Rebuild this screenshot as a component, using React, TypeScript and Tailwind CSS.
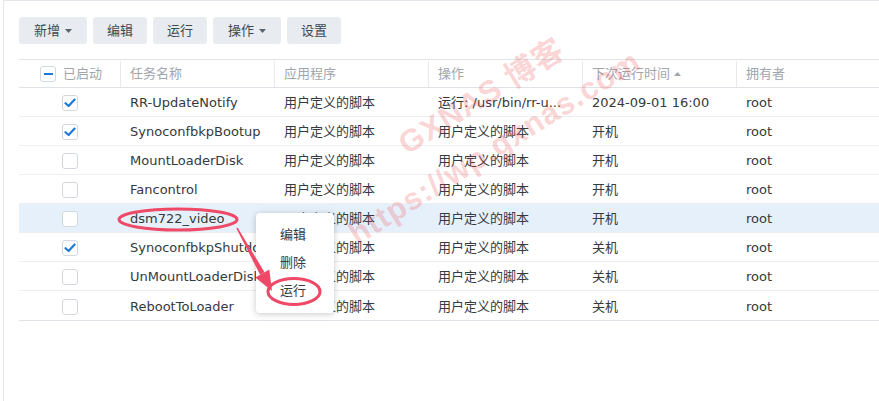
const rows = [
  { on: true, name: "RR-UpdateNotify", app: "用户定义的脚本", op: "运行: /usr/bin/rr-u...", next: "2024-09-01 16:00" },
  { on: true, name: "SynoconfbkpBootup", app: "用户定义的脚本", op: "用户定义的脚本", next: "开机" },
  { on: false, name: "MountLoaderDisk", app: "用户定义的脚本", op: "用户定义的脚本", next: "开机" },
  { on: false, name: "Fancontrol", app: "用户定义的脚本", op: "用户定义的脚本", next: "开机" },
  { on: false, name: "dsm722_video", app: "用户定义的脚本", op: "用户定义的脚本", next: "开机", selected: true },
  { on: true, name: "SynoconfbkpShutdown", app: "用户定义的脚本", op: "用户定义的脚本", next: "关机" },
  { on: false, name: "UnMountLoaderDisk", app: "用户定义的脚本", op: "用户定义的脚本", next: "关机" },
  { on: false, name: "RebootToLoader", app: "用户定义的脚本", op: "用户定义的脚本", next: "关机" },
];

const Caret = () => (
  <svg width="7" height="4" viewBox="0 0 7 4" className="ml-[5px]">
    <path d="M0 0h7L3.5 4z" fill="#5a646e" />
  </svg>
);

const Checkbox = ({ checked }: { checked?: boolean }) => (
  <div className="flex h-4 w-4 items-center justify-center rounded-[3px] border border-[#d3d8de] bg-white">
    {checked && (
      <svg width="12" height="10" viewBox="0 0 12 10">
        <path d="M1.5 5.2 4.6 8 10.6 1.6" fill="none" stroke="#1d7ad8" strokeWidth="2.2" strokeLinecap="round" strokeLinejoin="round" />
      </svg>
    )}
  </div>
);

const ToolButton = ({ label, caret }: { label: string; caret?: boolean }) => (
  <button
    className={
      "flex h-[27px] items-center justify-center rounded-[3px] bg-[#e8ecf0] text-[13px] text-[#3f4852] " +
      (caret ? "w-[68px]" : "w-[54px]")
    }
  >
    {label}
    {caret && <Caret />}
  </button>
);

const cols = "grid grid-cols-[102px_154px_154px_154px_154px_1fr]";

export default function App() {
  return (
    <div className="relative h-[401px] w-[879px] overflow-hidden bg-white font-['DejaVu_Sans','Noto_Sans_CJK_SC',sans-serif]">
      <div className="ml-[3px] h-full border-l border-t border-[#e3e6ea] pl-[15px] pt-4">
        <div className="flex gap-[6px]">
          <ToolButton label="新增" caret />
          <ToolButton label="编辑" />
          <ToolButton label="运行" />
          <ToolButton label="操作" caret />
          <ToolButton label="设置" />
        </div>

        <div className="mt-[15px] border-b border-[#dfe3e8]">
          <div className={cols + " h-[29px] border-y border-[#dfe3e8] pt-[1px] text-[13px] text-[#9fa6ad]"}>
            <div className="flex items-center gap-[7px] border-r border-[#e6e9ed] pl-[21px]">
              <div className="flex h-4 w-4 items-center justify-center rounded-[3px] border border-[#d3d8de] bg-white">
                <div className="h-[2px] w-[9px] bg-[#1d7ad8]" />
              </div>
              已启动
            </div>
            <div className="flex items-center border-r border-[#e6e9ed] pl-[9px]">任务名称</div>
            <div className="flex items-center border-r border-[#e6e9ed] pl-[9px]">应用程序</div>
            <div className="flex items-center border-r border-[#e6e9ed] pl-[9px]">操作</div>
            <div className="flex items-center border-r border-[#e6e9ed] pl-[9px]">
              下次运行时间
              <svg width="7" height="4" viewBox="0 0 7 4" className="ml-[4px]">
                <path d="M0 4h7L3.5 0z" fill="#9fa6ad" />
              </svg>
            </div>
            <div className="flex items-center pl-[9px]">拥有者</div>
          </div>

          {rows.map((r, i) => (
            <div
              key={r.name}
              className={
                cols +
                " h-[29px] pt-[2px] text-[13px] text-[#343a40] " +
                (i < rows.length - 1 ? "border-b border-[#eceef1] " : "") +
                (r.selected ? "bg-[#e6f0fb]" : "")
              }
            >
              <div className="flex items-center justify-center">
                <Checkbox checked={r.on} />
              </div>
              <div className="flex items-center overflow-hidden whitespace-nowrap pl-[9px]">{r.name}</div>
              <div className="flex items-center whitespace-nowrap pl-[9px]">{r.app}</div>
              <div className="flex items-center whitespace-nowrap pl-[9px]">{r.op}</div>
              <div className="flex items-center whitespace-nowrap pl-[9px]">{r.next}</div>
              <div className="flex items-center pl-[9px]">root</div>
            </div>
          ))}
        </div>
      </div>

      {/* context menu */}
      <div className="absolute left-[256px] top-[213px] z-10 flex h-[100px] w-[78px] flex-col justify-center gap-[8px] rounded-[4px] bg-white pl-[24px] text-[13px] text-[#343a40] shadow-[0_1px_6px_rgba(0,0,0,0.22)] font-['DejaVu_Sans','Noto_Sans_CJK_SC',sans-serif]">
        <div className="leading-[20px]">编辑</div>
        <div className="leading-[20px]">删除</div>
        <div className="leading-[20px]">运行</div>
      </div>

      {/* watermark */}
      <div className="pointer-events-none absolute left-[482px] top-[97px] z-20 -translate-x-1/2 -translate-y-1/2 -rotate-[32deg] whitespace-nowrap text-[31px] font-bold tracking-[1px] text-[rgba(238,70,70,0.24)] font-['Liberation_Sans','Noto_Sans_CJK_SC',sans-serif]">
        GXNAS 博客
      </div>
      <div className="pointer-events-none absolute left-[495px] top-[148px] z-20 -translate-x-1/2 -translate-y-1/2 -rotate-[32deg] whitespace-nowrap text-[31px] font-bold tracking-[1px] text-[rgba(238,70,70,0.24)] font-['Liberation_Sans',sans-serif]">
        https://wp.gxnas.com
      </div>

      {/* annotations */}
      <svg className="pointer-events-none absolute left-0 top-0 z-30" width="879" height="401">
        <ellipse cx="178" cy="219.5" rx="59" ry="10.5" fill="none" stroke="#ee4a68" strokeWidth="3" />
        <ellipse cx="294" cy="291.5" rx="26" ry="13" fill="none" stroke="#ee4a68" strokeWidth="3" />
        <polygon points="236.4,228.4 237.6,227.6 264.5,272.3 260.1,274.7" fill="#ee4a68" />
        <polygon points="272,291 255.3,277.4 269.3,269.6" fill="#ee4a68" />
      </svg>
    </div>
  );
}
